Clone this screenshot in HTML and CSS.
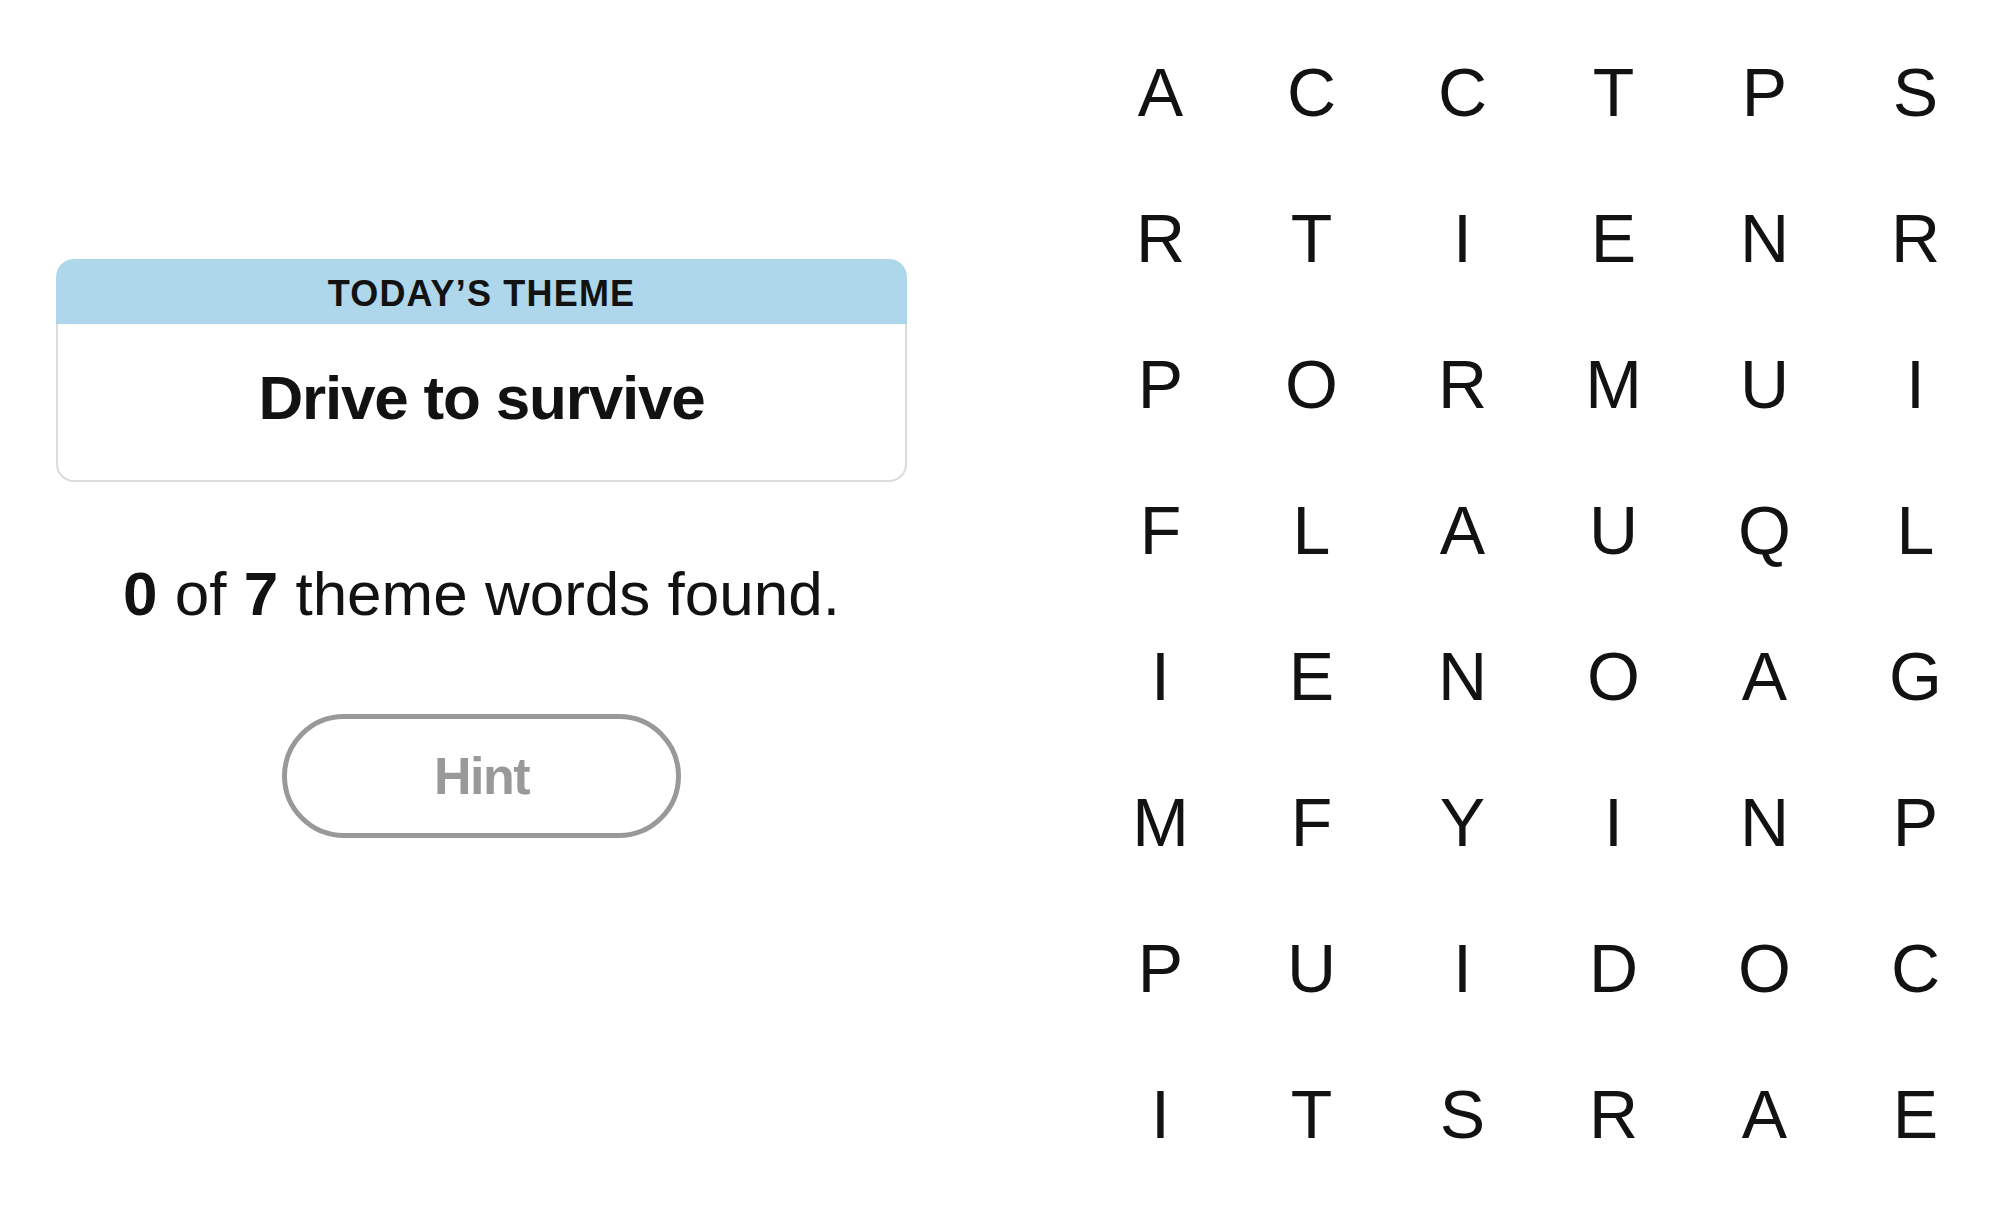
FILE: index.html
```html
<!DOCTYPE html>
<html lang="en">
<head>
  <meta charset="UTF-8">
  <meta name="viewport" content="width=device-width, initial-scale=1.0">
  <title>Strands</title>
  <link rel="stylesheet" href="styles.css">
</head>
<body>
  <div class="game">
    <div class="side">
      <div class="theme-card">
        <div class="theme-label">TODAY’S THEME</div>
        <div class="theme-text">Drive to survive</div>
      </div>
      <p class="found"><b>0</b> of <b>7</b> theme words found.</p>
      <button class="hint" disabled>Hint</button>
    </div>

    <div class="board">
      <div class="cell">A</div><div class="cell">C</div><div class="cell">C</div><div class="cell">T</div><div class="cell">P</div><div class="cell">S</div>
      <div class="cell">R</div><div class="cell">T</div><div class="cell">I</div><div class="cell">E</div><div class="cell">N</div><div class="cell">R</div>
      <div class="cell">P</div><div class="cell">O</div><div class="cell">R</div><div class="cell">M</div><div class="cell">U</div><div class="cell">I</div>
      <div class="cell">F</div><div class="cell">L</div><div class="cell">A</div><div class="cell">U</div><div class="cell">Q</div><div class="cell">L</div>
      <div class="cell">I</div><div class="cell">E</div><div class="cell">N</div><div class="cell">O</div><div class="cell">A</div><div class="cell">G</div>
      <div class="cell">M</div><div class="cell">F</div><div class="cell">Y</div><div class="cell">I</div><div class="cell">N</div><div class="cell">P</div>
      <div class="cell">P</div><div class="cell">U</div><div class="cell">I</div><div class="cell">D</div><div class="cell">O</div><div class="cell">C</div>
      <div class="cell">I</div><div class="cell">T</div><div class="cell">S</div><div class="cell">R</div><div class="cell">A</div><div class="cell">E</div>
    </div>
  </div>
</body>
</html>
```

FILE: styles.css
```css
body {
  margin: 0;
  padding: 0;
  background: #ffffff;
  color: #121212;
  font-family: "Liberation Sans", Arial, sans-serif;
  overflow: hidden;
}

.game {
  display: flex;
  align-items: flex-start;
}

.side {
  width: 851px;
  margin-left: 56px;
  padding-top: 259px;
  display: flex;
  flex-direction: column;
  align-items: center;
}

.theme-card {
  width: 100%;
}

.theme-label {
  height: 65px;
  background: #aed7eb;
  border-radius: 18px 18px 0 0;
  display: flex;
  justify-content: center;
  align-items: center;
  padding-top: 5px;
  box-sizing: border-box;
  font-size: 36px;
  font-weight: bold;
  letter-spacing: 1.2px;
  line-height: 1;
}

.theme-text {
  height: 158px;
  box-sizing: border-box;
  border: 2px solid #dcdcdc;
  border-top: none;
  border-radius: 0 0 18px 18px;
  display: flex;
  justify-content: center;
  align-items: center;
  padding-bottom: 8px;
  font-size: 62px;
  font-weight: bold;
  letter-spacing: -1.2px;
  line-height: 1;
}

.found {
  margin: 81px 0 0;
  font-size: 62px;
  line-height: 1;
}

.hint {
  margin-top: 89px;
  width: 399px;
  height: 124px;
  border: 5px solid #999999;
  border-radius: 62px;
  background: #ffffff;
  color: #999999;
  font-family: "Liberation Sans", Arial, sans-serif;
  font-size: 52px;
  font-weight: bold;
  letter-spacing: -1.5px;
  line-height: 1;
  display: flex;
  justify-content: center;
  align-items: center;
  padding: 0;
}

.board {
  margin-left: 178px;
  margin-top: 19px;
  display: grid;
  grid-template-columns: repeat(6, 151px);
  grid-template-rows: repeat(8, 146px);
}

.cell {
  display: flex;
  justify-content: center;
  align-items: center;
  font-size: 68px;
  line-height: 1;
  color: #121212;
}
```
